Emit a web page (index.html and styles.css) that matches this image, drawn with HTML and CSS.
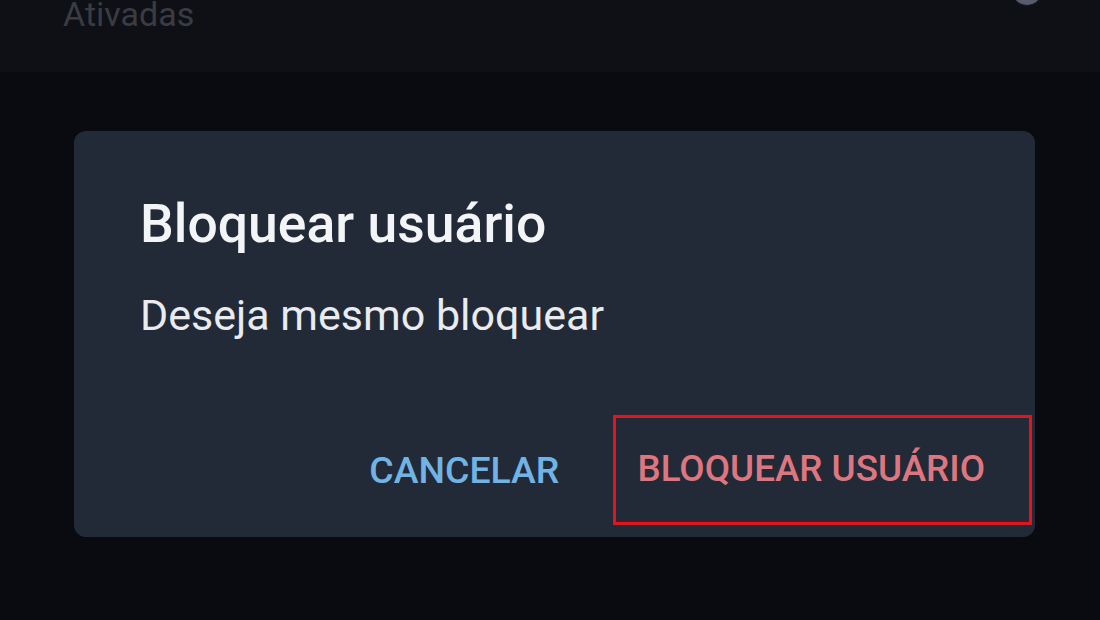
FILE: index.html
```html
<!DOCTYPE html>
<html lang="pt-BR">
<head>
  <meta charset="UTF-8" />
  <meta name="viewport" content="width=device-width, initial-scale=1.0" />
  <title>Bloquear usuário</title>
  <link rel="stylesheet" href="styles.css">
</head>
<body>
  <div class="topbar">
    <span class="section-label">Ativadas</span>
    <span class="switch-knob"></span>
  </div>

  <main class="screen">
    <div class="dialog" role="dialog" aria-labelledby="dlgTitle">
      <h2 id="dlgTitle" class="dialog-title">Bloquear usuário</h2>
      <p class="dialog-text">Deseja mesmo bloquear</p>
      <div class="dialog-actions">
        <button class="btn btn-cancel" type="button">CANCELAR</button>
        <button class="btn btn-block marked" type="button">BLOQUEAR USUÁRIO</button>
      </div>
    </div>
  </main>
</body>
</html>
```

FILE: styles.css
```css
body { margin: 0; padding: 0; background: #0a0b10; font-family: Roboto, "Noto Sans", Arial, sans-serif; overflow: hidden; height: 620px; }

/* dimmed screen behind the dialog */
.topbar {
  height: 72px;
  background: #0f1015;
  display: flex;
  justify-content: space-between;
  align-items: flex-start;
  padding: 0 58px 0 63px;
}
.section-label { font-size: 34px; line-height: 40px; margin-top: -6px; color: #3a3c43; }
.switch-knob {
  width: 30px; height: 30px; margin-top: -25px;
  border-radius: 50%;
  background: #565c6b;
  box-shadow: 0 1px 2px #1b1e26;
}

.screen { height: 548px; background: #0a0b10; padding-top: 59px; box-sizing: border-box; }

/* dialog */
.dialog {
  margin-left: 74px;
  width: 961px;
  height: 406px;
  box-sizing: border-box;
  background: #222a37;
  border-radius: 12px;
  padding: 61px 3px 12px 66px;
}
.dialog-title { margin: 0; font-size: 53.5px; line-height: 64px; font-weight: 500; color: #f3f4f6; }
.dialog-text { margin: 31px 0 0; font-size: 43px; line-height: 56px; color: #e9ebee; }

.dialog-actions { display: flex; justify-content: flex-end; align-items: center; gap: 54px; margin-top: 72px; }
.btn { background: none; border: none; font-family: inherit; font-size: 37px; line-height: 44px; font-weight: 500; padding: 0; cursor: pointer; }
.btn-cancel { color: #72b3e6; font-size: 37.4px; }
.btn-block { color: #de7680; font-size: 36.8px; padding: 29px 44px 31px 21px; }
.marked { border: 3px solid #e5141c; }
```
